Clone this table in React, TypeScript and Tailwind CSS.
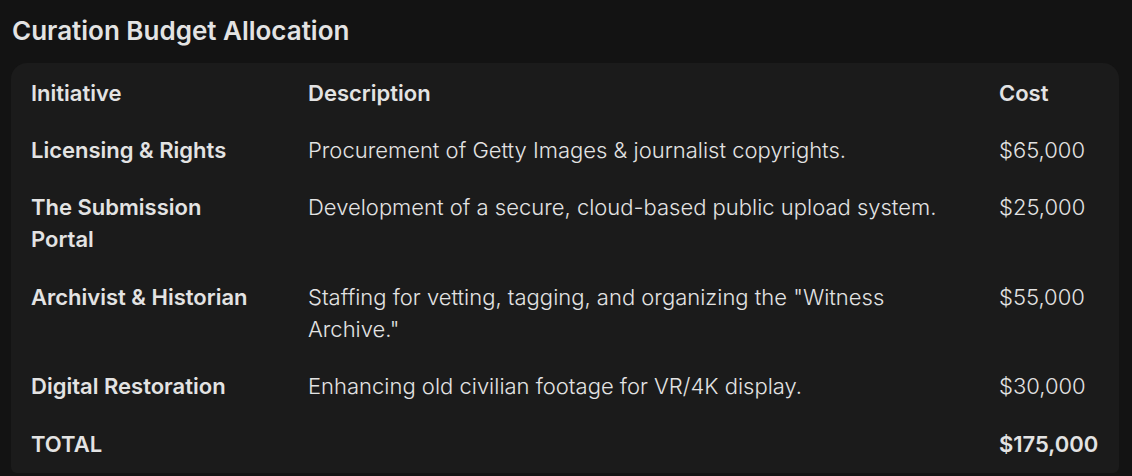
import React from 'react'

type Row = {
  name: string
  desc: string
  cost: string
}

const rows: Row[] = [
  { name: 'Licensing & Rights', desc: 'Procurement of Getty Images & journalist copyrights.', cost: '$65,000' },
  { name: 'The Submission Portal', desc: 'Development of a secure, cloud-based public upload system.', cost: '$25,000' },
  { name: 'Archivist & Historian', desc: 'Staffing for vetting, tagging, and organizing the "Witness Archive."', cost: '$55,000' },
  { name: 'Digital Restoration', desc: 'Enhancing old civilian footage for VR/4K display.', cost: '$30,000' },
]

function App() {
  return (
    <div
      className="min-h-screen bg-[#131313] px-[11px] pt-[15px] text-[#e3e3e3]"
      style={{ fontFamily: 'Inter, "Noto Sans", sans-serif' }}
    >
      <h2 className="pl-px text-[26px] font-semibold leading-8">Curation Budget Allocation</h2>

      <div className="mt-4 w-[1108px] rounded-t-2xl rounded-b-md bg-[#1b1b1b] px-5 pt-px text-[22px] leading-8">
        {/* header */}
        <div className="grid grid-cols-[277px_691px_1fr] py-[12.5px] font-semibold">
          <div>Initiative</div>
          <div>Description</div>
          <div>Cost</div>
        </div>

        {rows.map((r) => (
          <div key={r.name} className="grid grid-cols-[277px_691px_1fr] py-[12.75px]">
            <div className="w-[230px] font-semibold">{r.name}</div>
            <div className="w-[650px] font-light">{r.desc}</div>
            <div className="font-light">{r.cost}</div>
          </div>
        ))}

        {/* total */}
        <div className="grid grid-cols-[277px_691px_1fr] py-[12.75px] font-semibold">
          <div>TOTAL</div>
          <div></div>
          <div>$175,000</div>
        </div>
      </div>
    </div>
  )
}

export default App
